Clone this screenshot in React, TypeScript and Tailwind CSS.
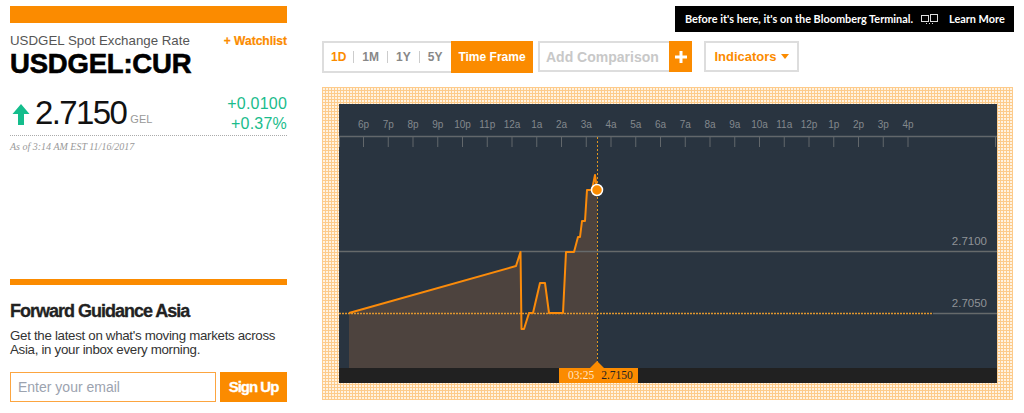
import React from 'react'

const hours = ['6p', '7p', '8p', '9p', '10p', '11p', '12a', '1a', '2a', '3a', '4a', '5a', '6a', '7a', '8a', '9a', '10a', '11a', '12p', '1p', '2p', '3p', '4p']

const points = '349,313 516,266 520.5,252 521.5,329 524,329 529,313 533,313 540,283 545,283 549,313 563,313 566,252 574,252 578,237 580,237 582,221 585,221 587,190 592,190 595,175 597,190'

// the svg sits at the panel's corner, so shift page coordinates by this much
const ox = 339
const oy = 104
const shift = (pts: string) =>
  pts
    .split(' ')
    .map((p) => {
      const [x, y] = p.split(',').map(Number)
      return `${x - ox},${y - oy}`
    })
    .join(' ')

const PriceChart = () => (
  <svg width={658} height={264} viewBox="0 0 658 264" className="block">
    {hours.map((h, i) => (
      <text key={h + i} x={24.75 * i + 24.5} y={24} textAnchor="middle" fontSize={10} fill="#83888d" fontFamily="Liberation Sans, sans-serif">
        {h}
      </text>
    ))}
    <line x1={0} x2={658} y1={32.5} y2={32.5} stroke="#62676b" strokeWidth={1.5} />
    {hours.map((h, i) => (
      <line key={h + i} x1={24.5 + 24.75 * i} x2={24.5 + 24.75 * i} y1={33} y2={43} stroke="#62676b" />
    ))}
    <line x1={0.5} x2={0.5} y1={33} y2={43} stroke="#62676b" />
    <line x1={656.5} x2={656.5} y1={33} y2={43} stroke="#62676b" />
    <polygon points={`10,264 ${shift(points)} 258,264`} fill="#4d433e" />
    <line x1={0} x2={658} y1={147.5} y2={147.5} stroke="#666a6b" strokeWidth={1.5} />
    <line x1={594} x2={658} y1={209.5} y2={209.5} stroke="#666a6b" strokeWidth={1.5} />
    <line x1={0} x2={593} y1={209.5} y2={209.5} stroke="#e0962f" strokeWidth={1.5} strokeDasharray="2 1" />
    <line x1={258.5} x2={258.5} y1={33} y2={264} stroke="#e0951f" strokeDasharray="2 2" />
    <polyline points={shift(points)} fill="none" stroke="#fb8b0a" strokeWidth={2} strokeLinejoin="round" />
    <circle cx={258} cy={86} r={5.5} fill="#fb8b00" stroke="#fff" strokeWidth={1.5} />
    <text x={648} y={141} textAnchor="end" fontSize={11.5} fill="#8f9397" fontFamily="Liberation Sans, sans-serif">2.7100</text>
    <text x={648} y={203} textAnchor="end" fontSize={11.5} fill="#8f9397" fontFamily="Liberation Sans, sans-serif">2.7050</text>
  </svg>
)

const App = () => (
  <div className="flex h-[413px] w-[1024px] overflow-hidden bg-white font-['Liberation_Sans',sans-serif]">
    <aside className="ml-[10px] flex w-[277px] shrink-0 flex-col pt-[6px]">
      <div className="h-[17px] bg-[#fb8b00]" />
      <div className="mt-[10px] flex items-center justify-between">
        <p className="text-[13.3px] leading-[16px] text-[#555]">USDGEL Spot Exchange Rate</p>
        <a className="text-[12px] leading-[16px] font-bold text-[#fb8b00] [-webkit-text-stroke:0.2px_#fb8b00]">+ Watchlist</a>
      </div>
      <h1 className="text-[27.5px] leading-[30px] font-bold tracking-[-0.2px] text-black [-webkit-text-stroke:0.6px_#000]">USDGEL:CUR</h1>
      <div className="mt-[14px] flex h-[40px] items-center justify-between">
        <div className="flex items-end">
          <svg width={18} height={21} viewBox="0 0 18 21" className="mb-[7px] ml-[2px]">
            <path d="M9 0 L17.5 10 H12 V21 H6 V10 H0.5 Z" fill="#14bd8c" />
          </svg>
          <span className="ml-[5px] text-[33px] leading-[38px] tracking-[-1.6px] text-[#111]">2.7150</span>
          <span className="mb-[6px] ml-[4px] text-[11px] leading-[14px] text-[#999]">GEL</span>
        </div>
        <div className="mt-[1px] text-right text-[16px] leading-[20px] tracking-[0.2px] text-[#1abc8c]">
          <p>+0.0100</p>
          <p>+0.37%</p>
        </div>
      </div>
      <div className="mt-[2px] border-t border-dotted border-[#aaa]" />
      <p className="mt-[5px] font-['Liberation_Serif',serif] text-[10px] leading-[12px] text-[#999] italic">As of 3:14 AM EST 11/16/2017</p>

      <div className="mt-[126px] h-[6px] bg-[#fb8b00]" />
      <h2 className="mt-[15px] text-[18px] leading-[22px] font-bold tracking-[-1px] text-[#222] [-webkit-text-stroke:0.3px_#222]">Forward Guidance Asia</h2>
      <p className="mt-[7px] text-[13.3px] leading-[14px] tracking-[-0.3px] text-[#333]">
        Get the latest on what's moving markets across Asia, in your inbox every morning.
      </p>
      <form className="mt-[15px] flex justify-between">
        <input
          placeholder="Enter your email"
          className="h-[30px] w-[206px] border border-[#fca540] px-[7px] text-[14px] outline-none placeholder:text-[#9ca3af]"
        />
        <button type="button" className="h-[30px] w-[67px] bg-[#fb8b00] text-[15px] font-bold tracking-[-1px] text-white [-webkit-text-stroke:0.3px_#fff]">
          Sign Up
        </button>
      </form>
    </aside>

    <main className="ml-[35px] flex w-[692px] shrink-0 flex-col pt-[6px]">
      <div className="flex h-[26px] justify-end">
        <div className="flex w-[339px] items-center bg-black pl-[10px] font-['Lato',sans-serif] text-[10.9px] font-bold whitespace-nowrap text-white">
          <span>Before it's here, it's on the Bloomberg Terminal.</span>
          <svg width={17} height={13} viewBox="0 0 17 13" fill="none" stroke="#ddd" className="ml-[8px]">
            <rect x={0.5} y={2.5} width={7} height={6} />
            <rect x={9.5} y={1.5} width={7} height={7} />
            <path d="M5 10.5h1M8 10.5h1M11 10.5h1" />
          </svg>
          <span className="ml-[11px]">Learn More</span>
        </div>
      </div>
      <div className="mt-[9px] flex h-[32px] items-start">
        <div className="flex h-[32px] w-[129px] items-center border-2 border-r-0 border-[#ddd] text-[12px] font-bold text-[#888]">
          <span className="ml-[7px] text-[#fb8b00]">1D</span>
          <span className="ml-[7px] h-[12px] w-px bg-[#ccc]" />
          <span className="ml-[8px]">1M</span>
          <span className="ml-[8px] h-[12px] w-px bg-[#ccc]" />
          <span className="ml-[8px]">1Y</span>
          <span className="ml-[8px] h-[12px] w-px bg-[#ccc]" />
          <span className="ml-[8px]">5Y</span>
        </div>
        <div className="flex h-[32px] w-[82px] items-center justify-center bg-[#fb8b00] text-[12px] font-bold text-white">
          Time Frame
        </div>
        <div className="ml-[5px] flex h-[31px] w-[131px] items-center border-2 border-r-0 border-[#ddd] pt-px pl-[6px] text-[14px] font-bold text-[#c8c8c8]">
          Add Comparison
        </div>
        <div className="flex h-[31px] w-[23px] items-center justify-center bg-[#fb8b00]">
          <svg width={12} height={12} viewBox="0 0 12 12"><path d="M4.5 0h3v4.5H12v3H7.5V12h-3V7.5H0v-3h4.5z" fill="#fff" /></svg>
        </div>
        <div className="ml-[12px] flex h-[31px] w-[95px] items-center justify-center gap-[4px] border-2 border-[#ddd] text-[13px] font-bold text-[#fb8b00]">
          Indicators
          <svg width={8} height={5} viewBox="0 0 8 5"><path d="M0 0h8L4 5z" fill="#fb8b00" /></svg>
        </div>
      </div>
      <div className="mt-[14px] h-[313px] w-[691px] bg-[#fff3e2] bg-[linear-gradient(#fdcb8b_1px,transparent_1px),linear-gradient(90deg,#fdcb8b_1px,transparent_1px)] bg-[size:3px_3px] pt-[17px] pl-[17px]">
        <div className="relative w-[658px]">
          <div className="bg-[#293440]">
            <PriceChart />
          </div>
          <div className="h-[15px] bg-[#212121]" />
          <div className="absolute top-[264px] left-[220px] flex h-[15px] w-[79px] items-center gap-[7px] bg-[#fb8b00] pl-[9px] font-['Liberation_Serif',serif] text-[11.5px] leading-[15px]">
            <span className="text-[#ffe4c4]">03:25</span>
            <span className="text-[#222]">2.7150</span>
          </div>
          <div className="absolute top-[257px] left-[251px] h-0 w-0 border-x-[7px] border-b-[7px] border-x-transparent border-b-[#fb8b00]" />
        </div>
      </div>
    </main>
  </div>
)

export default App
